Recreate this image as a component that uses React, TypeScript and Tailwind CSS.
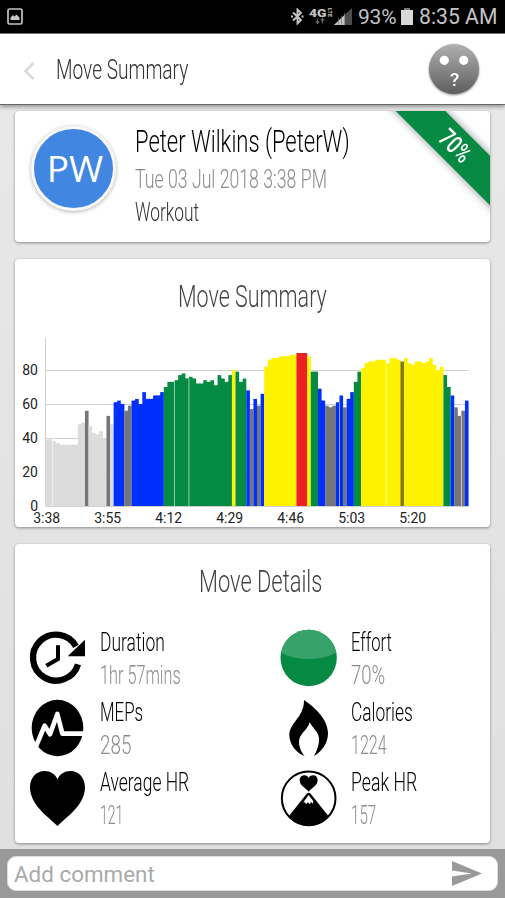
import { useLayoutEffect, useRef, useState, type ReactNode } from 'react'

// colour key: l = resting, g = recovery, b = easy, n = moderate, y = hard, r = max, o = mixed
const zoneColors: Record<string, string> = {
  l: '#dcdcdc',
  g: '#757679',
  b: '#0030fc',
  n: '#058b43',
  y: '#fff200',
  r: '#ee2024',
  o: '#857d00',
}

// one entry per minute, 3:38 to 5:35
const minutes = (
  'l39 l40 l38 l37 l36 l36 l36 l36 l36 l48 l49 g56 l47 l43 l42 l44 l40 g53 l48 ' +
  'b61 b62 b60 g56 g59 b62 b63 b60 b67 b63 b63 b65 b65 b67 ' +
  'n70 n73 n73 n74 n77 n78 n75 n76 n75 n72 n72 n74 n73 n74 n71 n77 n75 n73 n77 y80 n79 n73 n75 ' +
  'b68 g57 b63 g59 b66 y82 y86 y87 y87 y88 y88 y88 y89 y89 r90 r90 r90 y88 ' +
  'n79 n79 b69 b62 g59 g58 g59 b61 b65 g58 b63 b67 n73 n79 ' +
  'y81 y84 y85 y85 y86 y86 y86 y84 y87 y87 y86 o85 y87 y84 y83 y85 y85 y84 y85 y87 y83 y80 y82 ' +
  'n77 n70 b65 g58 g53 g56 b62'
)
  .split(' ')
  .map((m) => ({ zone: m[0], value: Number(m.slice(1)) }))

const BAR = 3.585
const LEFT = 30.5
const BASE = 176
const UNIT = 1.7
const seams = [2, 36, 40, 82, 95, 116]
const times = ['3:38', '3:55', '4:12', '4:29', '4:46', '5:03', '5:20']

// Condensed text: squeezes its content to the width of the box
function Condensed({ className = '', children }: { className?: string; children: ReactNode }) {
  const outer = useRef<HTMLSpanElement>(null)
  const inner = useRef<HTMLSpanElement>(null)
  const [scale, setScale] = useState(0.7)

  useLayoutEffect(() => {
    if (outer.current && inner.current) {
      setScale(outer.current.offsetWidth / inner.current.offsetWidth)
    }
  }, [])

  return (
    <span ref={outer} className={`block whitespace-nowrap ${className}`}>
      <span ref={inner} className="inline-block origin-left" style={{ transform: `scaleX(${scale})` }}>
        {children}
      </span>
    </span>
  )
}

function StatusBar() {
  return (
    <div className="flex h-[34px] shrink-0 items-center border-b border-[#777] bg-black pl-[7px] pr-[9px] text-[#c4c4c4]">
      <svg className="h-[17px] w-[16px]" viewBox="0 0 16 17" fill="none">
        <rect x="1" y="1" width="14" height="15" rx="1.5" stroke="#c4c4c4" strokeWidth="1.7" />
        <path d="M3.5 12V9.5L6 7l1.5 1.5L9.500 6.500 12.500 9.500V12z" fill="#c4c4c4" />
      </svg>
      <div className="ml-auto flex items-center">
        <svg className="h-[17px] w-[13px]" viewBox="0 0 13 17" fill="none" stroke="#c4c4c4" strokeWidth="1.9">
          <path d="M2 4.500 10 12 6.500 15.500V1.500L10 5 2 12.500" />
          <path d="M0 8.500h2M10.500 8.500h2" />
        </svg>
        <svg className="ml-[5px] h-[18px] w-[24px] overflow-visible" viewBox="0 0 24 18" fontFamily="Roboto" fill="#c4c4c4">
          <text x="0" y="8.500" fontSize="11.500" fontWeight="900" textLength="17.500" lengthAdjust="spacingAndGlyphs">
            4G
          </text>
          <text transform="translate(18.500 0) rotate(90)" fontSize="5.500" fontWeight="700" textLength="9">
            LTE
          </text>
          <path d="M8.500 10.500v5M6.800 13.500 8.500 15.500l1.700-2M13.500 15.500v-5M11.800 12.500 13.500 10.500l1.700 2" stroke="#606060" strokeWidth="1.300" fill="none" />
        </svg>
        <svg className="ml-px h-[17px] w-[18px]" viewBox="0 0 18 17">
          <path d="M0 17 18 0v17z" fill="#4d4d4d" />
          <path d="M0 17 11 6.600V17z" fill="#c4c4c4" />
          <path d="M4.500 10v7M7.500 8v9M10.500 5v12" stroke="#777" strokeWidth=".6" />
        </svg>
        <span className="ml-[6px] w-[39px] whitespace-nowrap text-[21px] leading-[36px] tracking-[-0.2px]">93%</span>
        <svg className="ml-1 h-[17px] w-[12px]" viewBox="0 0 12 17">
          <path d="M0 2h3V0h6v2h3v15H0z" fill="#d8d8d8" />
          <path d="M3 0h6v2H3z" fill="#777" />
        </svg>
        <span className="ml-[6px] w-[77px] whitespace-nowrap text-[21.200px] leading-[36px]">8:35 AM</span>
      </div>
    </div>
  )
}

function Header() {
  return (
    <header className="z-10 flex h-[71px] shrink-0 items-center border-b border-[#666] bg-white pl-6 pr-[26px] shadow-[0_2px_4px_rgba(0,0,0,0.35)]">
      <svg className="mt-[3px] h-[18px] w-[11px]" viewBox="0 0 11 18" fill="none">
        <path d="M9.500 1 1.500 9l8 8" stroke="#dcdcdc" strokeWidth="3" />
      </svg>
      <Condensed className="ml-[21px] w-[132px] text-[28.500px] font-light leading-[69px] text-[#333]">Move Summary</Condensed>
      <svg className="ml-auto h-[50px] w-[50px] overflow-visible drop-shadow-[0_1px_1px_rgba(0,0,0,0.5)]" viewBox="0 0 50 50">
        <defs>
          <linearGradient id="face" x1="0" y1="0" x2="0" y2="1">
            <stop offset="0" stopColor="#b0b0b0" />
            <stop offset="1" stopColor="#5e5e5e" />
          </linearGradient>
        </defs>
        <circle cx="25" cy="25" r="25" fill="url(#face)" />
        <circle cx="15.300" cy="16.300" r="4.600" fill="#fff" />
        <circle cx="34.700" cy="16.300" r="4.600" fill="#fff" />
        <text x="25.500" y="42" textAnchor="middle" fontSize="19" fontWeight="500" fontFamily="Roboto" fill="#fff">
          ?
        </text>
      </svg>
    </header>
  )
}

function ProfileCard() {
  return (
    <section className="relative flex h-[131px] overflow-hidden rounded bg-white pl-4 shadow-[0_1px_3px_rgba(0,0,0,0.4)]">
      <div className="mt-[15px] flex h-[85px] w-[85px] items-center justify-center rounded-full border-[3px] border-[#f8f8f8] bg-[#4186e0] shadow-[0_1px_4px_rgba(0,0,0,0.3)]">
        <span className="ml-[3px] mt-[-2px] font-['Open_Sans'] text-[37px] leading-none text-white">PW</span>
      </div>
      <div className="ml-[19px] pt-[13px] font-light">
        <Condensed className="w-[215px] text-[31px] leading-[36px] text-black">Peter Wilkins (PeterW)</Condensed>
        <Condensed className="mt-[3px] w-[192px] text-[26px] leading-[33px] text-[#8c8c8c]">Tue 03 Jul 2018 3:38 PM</Condensed>
        <Condensed className="w-[64px] text-[26px] leading-[33px] text-[#333]">Workout</Condensed>
      </div>
      <div className="absolute -right-[45px] top-[17px] flex h-[35px] w-40 rotate-45 items-center justify-center bg-[#068a43] shadow-[0_0_8px_rgba(0,0,0,0.45)]">
        <Condensed className="w-[35px] text-[25px] font-medium leading-[35px] text-white">70%</Condensed>
      </div>
    </section>
  )
}

function ChartCard() {
  return (
    <section className="mt-[17px] h-[268px] rounded bg-white shadow-[0_1px_3px_rgba(0,0,0,0.4)]">
      <h2 className="flex h-[71px] justify-center pt-[17px]">
        <Condensed className="w-[149px] text-[32px] font-light leading-[40px] text-[#444]">Move Summary</Condensed>
      </h2>
      <svg className="h-[197px] w-[474px]" viewBox="0 0 474 197" fontFamily="Roboto" fontSize="14" fill="#222">
        {[0, 20, 40, 60, 80].map((v) => (
          <g key={v}>
            <path d={`M${LEFT} ${BASE - v * UNIT + 0.5}H453.500`} stroke="#cfcfcf" />
            <text x="23" y={BASE - v * UNIT + 4.5} textAnchor="end">
              {v}
            </text>
          </g>
        ))}
        <path d={`M30.500 8V${BASE}`} stroke="#cfcfcf" />
        {minutes.map(({ zone, value }, i) => (
          <rect
            key={i}
            x={LEFT + i * BAR}
            y={BASE - value * UNIT}
            width={BAR + 0.05}
            height={value * UNIT}
            fill={zoneColors[zone]}
          />
        ))}
        {/* cover the joint between neighbours of the same colour */}
        {minutes.map(({ zone, value }, i) => {
          const prev = minutes[i - 1]
          if (!prev || prev.zone !== zone) return null
          const h = Math.min(prev.value, value) * UNIT
          return <rect key={i} x={LEFT + i * BAR - 1} y={BASE - h} width="2" height={h} fill={zoneColors[zone]} />
        })}
        {seams.map((i) => (
          <rect
            key={i}
            x={LEFT + i * BAR - 0.3}
            y={BASE - minutes[i - 1].value * UNIT}
            width="0.700"
            height={minutes[i - 1].value * UNIT}
            fill="#fff"
            fillOpacity="0.8"
          />
        ))}
        {times.map((t, i) => (
          <text key={t} x={31.7 + i * 61} y="192.500" textAnchor="middle">
            {t}
          </text>
        ))}
      </svg>
    </section>
  )
}

function DurationIcon() {
  return (
    <svg className="h-[57px] w-[57px] overflow-visible" viewBox="87 270 171 171" fill="none" stroke="#000">
      <path d="M234 373A69 69 0 1 1 228 319" strokeWidth="19" />
      <path d="M174 316V357L139 377" strokeWidth="12" />
      <path d="M255 299V349H203z" fill="#000" stroke="none" />
    </svg>
  )
}

function EffortIcon() {
  return (
    <svg className="h-[57px] w-[57px] overflow-visible" viewBox="90 210 171 171">
      <circle cx="176" cy="294" r="84.500" fill="#068a43" />
      <path d="M93 278A84.500 84.500 0 0 1 259 278Q222 297 176 297T93 278" fill="#37a269" />
    </svg>
  )
}

function PulseIcon() {
  return (
    <svg className="h-[57px] w-[57px] overflow-visible" viewBox="87 30 171 171">
      <ellipse cx="172.500" cy="114" rx="77.500" ry="84.500" />
      <path d="M108 169 134 107 150 133 172 72 187 131H252" fill="none" stroke="#fff" strokeWidth="14" strokeLinejoin="round" />
    </svg>
  )
}

function FlameIcon() {
  return (
    <svg className="h-[57px] w-[57px] overflow-visible" viewBox="90 30 171 171">
      <path d="M162 30C188 48 234 84 234 130C234 160 215 186 192 198C200 184 208 165 207 145C206 126 186 112 179 97C172 122 147 131 147 156C147 172 155 188 164 198C140 190 118 165 118 135C118 98 163 82 162 30z" />
    </svg>
  )
}

function HeartIcon() {
  return (
    <svg className="h-[57px] w-[57px] overflow-visible" viewBox="87 240 171 171">
      <path d="M172.500 408C145 381 90 345 90 292C90 263 109 243 134 243C151 243 166 252 172.500 268C179 252 194 243 211 243C236 243 255 263 255 292C255 345 200 381 172.500 408z" />
    </svg>
  )
}

function PeakIcon() {
  return (
    <svg className="h-[57px] w-[57px] overflow-visible" viewBox="90 240 171 171">
      <circle cx="176" cy="325" r="80.500" fill="#fff" stroke="#000" strokeWidth="6" />
      <path d="M170 311Q176 305 182 311L235 378A80 80 0 0 1 117 378z" />
      <path d="M176 315 190 334 188 341 183 336 179 343 174 337 168 343 165 337 160 337z" fill="#fff" />
      <path d="M176 305C167 294 149 287 149 270C149 261 155 256 163 256C169 256 174 259 176 264C178 259 183 256 189 256C197 256 203 261 203 270C203 287 185 294 176 305z" />
    </svg>
  )
}

const details = [
  { label: 'Duration', value: '1hr 57mins', icon: <DurationIcon />, labelWidth: 'w-[65px]', valueWidth: 'w-[81px]' },
  { label: 'Effort', value: '70%', icon: <EffortIcon />, labelWidth: 'w-[41px]', valueWidth: 'w-[34px]' },
  { label: 'MEPs', value: '285', icon: <PulseIcon />, labelWidth: 'w-[43px]', valueWidth: 'w-[31px]' },
  { label: 'Calories', value: '1224', icon: <FlameIcon />, labelWidth: 'w-[62px]', valueWidth: 'w-[36px]' },
  { label: 'Average HR', value: '121', icon: <HeartIcon />, labelWidth: 'w-[89px]', valueWidth: 'w-[23px]' },
  { label: 'Peak HR', value: '157', icon: <PeakIcon />, labelWidth: 'w-[66px]', valueWidth: 'w-[25px]' },
]

function DetailsCard() {
  return (
    <section className="mt-[17px] h-[299px] rounded bg-white shadow-[0_1px_3px_rgba(0,0,0,0.4)]">
      <h2 className="flex h-[82px] justify-center pl-[15px] pt-[17px]">
        <Condensed className="w-[123px] text-[32px] font-light leading-[40px] text-[#444]">Move Details</Condensed>
      </h2>
      <div className="grid grid-cols-[251px_1fr] gap-y-1 pl-[14px]">
        {details.map((d) => (
          <div key={d.label} className="flex">
            <div className="pt-1">{d.icon}</div>
            <div className="ml-[14px] text-[25.500px] font-light leading-[33px]">
              <Condensed className={`text-black ${d.labelWidth}`}>{d.label}</Condensed>
              <Condensed className={`text-[#8c8c8c] ${d.valueWidth}`}>{d.value}</Condensed>
            </div>
          </div>
        ))}
      </div>
    </section>
  )
}

function CommentBar() {
  return (
    <footer className="z-10 h-[49px] shrink-0 bg-[#999] px-[7px] pt-[7px]">
      <div className="flex h-[35px] items-center justify-between rounded-[9px] border border-[#ddd] bg-white pl-[6px] pr-[15px]">
        <span className="pt-[2px] text-[22.400px] leading-none text-[#aaa]">Add comment</span>
        <svg className="h-[25px] w-[30px]" viewBox="0 0 30 25">
          <path d="M0 0 30 12.500 0 25V15.500L20 12.500 0 9.500z" fill="#999" />
        </svg>
      </div>
    </footer>
  )
}

export default function App() {
  return (
    <div className="flex h-[898px] w-[505px] flex-col overflow-hidden bg-gradient-to-b from-[#e9e9e9] to-[#dfdfdf] font-['Roboto',sans-serif]">
      <StatusBar />
      <Header />
      <main className="flex-1 overflow-hidden pl-[15px] pr-[15px] pt-[6px]">
        <ProfileCard />
        <ChartCard />
        <DetailsCard />
      </main>
      <CommentBar />
    </div>
  )
}
